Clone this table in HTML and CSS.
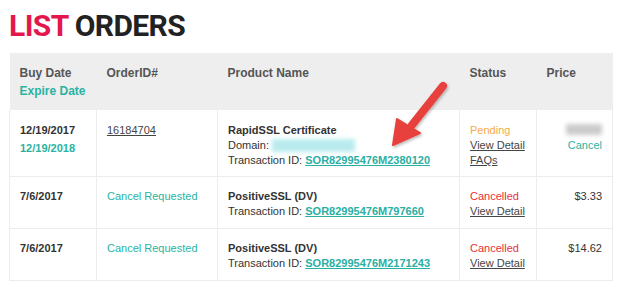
FILE: index.html
```html
<!DOCTYPE html>
<html>
<head>
<meta charset="utf-8">
<link rel="stylesheet" href="styles.css">
</head>
<body>
<div class="page">
  <h1 class="title"><span class="title-red">LIST</span> ORDERS</h1>
  <table class="orders">
    <colgroup>
      <col class="c-date"><col class="c-id"><col class="c-prod"><col class="c-status"><col class="c-price">
    </colgroup>
    <thead>
      <tr>
        <th><div>Buy Date</div><div class="teal">Expire Date</div></th>
        <th>OrderID#</th>
        <th>Product Name</th>
        <th>Status</th>
        <th>Price</th>
      </tr>
    </thead>
    <tbody>
      <tr class="row-first">
        <td class="bold"><div>12/19/2017</div><div class="teal expire">12/19/2018</div></td>
        <td><a class="link" href="#">16184704</a></td>
        <td>
          <div class="bold">RapidSSL Certificate</div>
          <div>Domain: <span class="blur-domain"></span></div>
          <div>Transaction ID: <a class="txn" href="#">SOR82995476M2380120</a></div>
        </td>
        <td>
          <div class="pending">Pending</div>
          <div><a class="link" href="#">View Detail</a></div>
          <div><a class="link" href="#">FAQs</a></div>
        </td>
        <td class="price">
          <div><span class="blur-price"></span></div>
          <div class="teal">Cancel</div>
        </td>
      </tr>
      <tr class="row-next">
        <td class="bold">7/6/2017</td>
        <td class="teal">Cancel Requested</td>
        <td>
          <div class="bold">PositiveSSL (DV)</div>
          <div>Transaction ID: <a class="txn" href="#">SOR82995476M797660</a></div>
        </td>
        <td>
          <div class="cancelled">Cancelled</div>
          <div><a class="link" href="#">View Detail</a></div>
        </td>
        <td class="price">$3.33</td>
      </tr>
      <tr class="row-next">
        <td class="bold">7/6/2017</td>
        <td class="teal">Cancel Requested</td>
        <td>
          <div class="bold">PositiveSSL (DV)</div>
          <div>Transaction ID: <a class="txn" href="#">SOR82995476M2171243</a></div>
        </td>
        <td>
          <div class="cancelled">Cancelled</div>
          <div><a class="link" href="#">View Detail</a></div>
        </td>
        <td class="price">$14.62</td>
      </tr>
    </tbody>
  </table>
  <svg class="arrow" width="80" height="90" viewBox="0 0 80 90">
    <defs>
      <filter id="sh" x="-30%" y="-30%" width="160%" height="160%">
        <feDropShadow dx="1" dy="1.5" stdDeviation="1.5" flood-color="#000" flood-opacity="0.3"/>
      </filter>
    </defs>
    <g filter="url(#sh)">
      <line x1="61" y1="11" x2="30" y2="50" stroke="#e8413c" stroke-width="8" stroke-linecap="round"/>
      <polygon points="11,70 15,44 38,58" fill="#e8413c" stroke="#e8413c" stroke-width="2" stroke-linejoin="round"/>
    </g>
  </svg>
</div>
</body>
</html>
```
FILE: styles.css
```css
html, body {
  margin: 0;
  padding: 0;
  background: #ffffff;
}
.page {
  position: relative;
  width: 624px;
  height: 288px;
  overflow: hidden;
  font-family: "Liberation Sans", Arial, sans-serif;
  font-size: 11px;
  color: #333333;
}
.title {
  margin: 8px 0 9px 9px;
  font-family: Roboto, "Liberation Sans", sans-serif;
  font-weight: 700;
  font-size: 30px;
  line-height: 36px;
  color: #222222;
  letter-spacing: -0.6px;
}
.title-red {
  color: #e3164d;
}
.orders {
  margin-left: 9px;
  width: 603px;
  border-collapse: collapse;
  table-layout: fixed;
}
.c-date { width: 87px; }
.c-id { width: 121px; }
.c-prod { width: 242px; }
.c-status { width: 77px; }
.c-price { width: 76px; }
.orders thead tr {
  height: 57px;
}
.orders th {
  background: #eeeeee;
  text-align: left;
  vertical-align: top;
  font-weight: 700;
  font-size: 12px;
  color: #555555;
  padding: 11px 10px 0 10px;
  line-height: 18px;
}
.orders td {
  vertical-align: top;
  padding: 12px 10px 0 10px;
  line-height: 15px;
  border: 1px solid #ececec;
  border-top: none;
}
.row-first {
  height: 66px;
}
.row-first td {
  padding-top: 13px;
}
.row-next {
  height: 52px;
}
.bold {
  font-weight: 700;
}
.teal {
  color: #2ab3a3;
}
.expire {
  margin-top: 3px;
}
.link {
  color: #444444;
  text-decoration: underline;
}
.txn {
  color: #2aafa3;
  font-weight: 700;
  text-decoration: underline;
}
.pending {
  color: #f5a94a;
}
.cancelled {
  color: #ea2f3a;
}
.price {
  text-align: right;
}
.blur-domain {
  display: inline-block;
  width: 83px;
  height: 13px;
  vertical-align: -3px;
  background: #b9ebee;
  filter: blur(2px);
}
.blur-price {
  display: inline-block;
  width: 36px;
  height: 11px;
  vertical-align: -1px;
  background: #cccccc;
  filter: blur(2px);
}
.arrow {
  position: absolute;
  left: 382px;
  top: 75px;
}
```
